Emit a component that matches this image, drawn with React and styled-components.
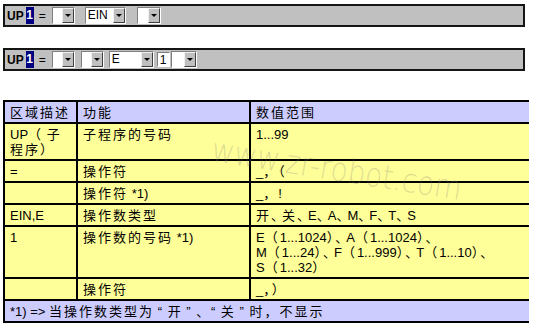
import React from 'react';
import styled, { createGlobalStyle } from 'styled-components';

const Global = createGlobalStyle`
  body {
    margin: 0;
    background: #fff;
    font-family: "Liberation Sans", "Noto Sans CJK SC", sans-serif;
  }
`;

const Page = styled.div`
  width: 540px;
  height: 328px;
  padding-top: 4px;
  box-sizing: border-box;
`;

// gray instruction bar with the editable fields
const Bar = styled.div`
  display: flex;
  align-items: center;
  box-sizing: border-box;
  width: 522px;
  height: 23px;
  margin: 0 0 ${p => p.$mb || 0}px 3px;
  padding-left: 2px;
  background: #c0c0c0;
  border: 2px solid #151515;
  font-size: 12px;
  color: #000;
`;

const Op = styled.span`
  font-weight: bold;
  margin-left: ${p => p.$ml || 0}px;
`;

const Eq = styled.span`
  margin-left: ${p => p.$ml || 0}px;
`;

const Selected = styled.span`
  display: inline-block;
  width: 8px;
  height: 17px;
  line-height: 17px;
  margin-left: ${p => p.$ml || 0}px;
  background: #000080;
  color: #fff;
  font-weight: bold;
  text-align: center;
`;

const Combo = styled.div`
  display: inline-flex;
  height: 15px;
  margin-left: ${p => p.$ml || 0}px;
  border: 1px solid;
  border-color: #808080 #fff #fff #808080;
`;

const Field = styled.div`
  width: ${p => p.$w}px;
  background: #fff;
  line-height: 15px;
  padding-left: 2px;
  box-sizing: border-box;
  overflow: hidden;
`;

const DropBtn = styled.div`
  display: flex;
  align-items: center;
  justify-content: center;
  width: 12px;
  box-sizing: border-box;
  background: #c0c0c0;
  border: 1px solid;
  border-color: #f0f0f0 #404040 #404040 #f0f0f0;

  &::after {
    content: '';
    border-left: 3px solid transparent;
    border-right: 3px solid transparent;
    border-top: 3px solid #000;
  }
`;

const Input = styled.div`
  width: ${p => p.$w}px;
  height: 15px;
  margin-left: ${p => p.$ml || 0}px;
  line-height: 15px;
  padding-left: 2px;
  box-sizing: border-box;
  background: #fff;
  border: 1px solid;
  border-color: #808080 #fff #fff #808080;
`;

const Select = ({ w, ml, value }) => (
  <Combo $ml={ml}>
    <Field $w={w}>{value}</Field>
    <DropBtn />
  </Combo>
);

const TableWrap = styled.div`
  position: relative;
  width: 526px;
  margin-left: 3px;
  overflow: hidden;
`;

const Table = styled.table`
  width: 526px;
  border-collapse: collapse;
  table-layout: fixed;
  font-size: 13px;
  color: #000;
`;

const Cell = styled.td`
  border: 2px solid #000;
  padding: 3px 5px 2px;
  line-height: 15px;
  vertical-align: top;
  background: ${p => (p.$head ? '#ccccff' : '#ffff99')};
  height: ${p => p.$h}px;
  box-sizing: border-box;
  white-space: nowrap;
`;

// Chinese runs are set wider than the latin ones
const Zh = styled.span`
  letter-spacing: 2px;
`;

// the enumeration comma sits tight against its neighbours
const Dun = styled.span`
  letter-spacing: -4px;
  margin-right: 2px;
`;

const Watermark = styled.div`
  position: absolute;
  left: 212px;
  top: 30px;
  font-family: "DejaVu Sans", sans-serif;
  font-weight: 200;
  font-size: 33px;
  color: rgba(120, 120, 120, 0.26);
  transform: rotate(9deg) scaleX(0.85);
  transform-origin: left top;
  white-space: nowrap;
  pointer-events: none;
`;

const zh = text =>
  text.split(/([\u2018-\u201d\u3000-\u9fff\uff00-\uffef]+)/).map((part, i) => {
    if (i % 2 === 0) return part;
    if (!part.includes('、')) return <Zh key={i}>{part}</Zh>;
    return (
      <Zh key={i}>
        {part.split('、').map((s, j) => (
          <React.Fragment key={j}>
            {j > 0 && <Dun>、</Dun>}
            {s}
          </React.Fragment>
        ))}
      </Zh>
    );
  });

const lines = (...parts) =>
  parts.map((p, i) => (
    <React.Fragment key={i}>
      {i > 0 && <br />}
      {zh(p)}
    </React.Fragment>
  ));

const rows = [
  { a: ['UP（ 子', '程序）'], b: ['子程序的号码'], c: ['1...99'], h: 36 },
  { a: ['='], b: ['操作符'], c: ['_，（'], h: 22 },
  { a: [''], b: ['操作符 *1)'], c: ['_，!'], h: 21 },
  { a: ['EIN,E'], b: ['操作数类型'], c: ['开、关、E、A、M、F、T、S'], h: 22 },
  {
    a: ['1'],
    b: ['操作数的号码 *1)'],
    c: ['E（1...1024）、A（1...1024）、', 'M（1...24）、F（1...999）、T（1...10）、', 'S（1...32）'],
    h: 52,
  },
  { a: [''], b: ['操作符'], c: ['_，）'], h: 21 },
];

export default function App() {
  return (
    <Page>
      <Global />
      <Bar $mb={21}>
        <Op>UP</Op>
        <Selected $ml={2}>1</Selected>
        <Eq $ml={5}>=</Eq>
        <Select ml={6} w={9} />
        <Select ml={10} w={27} value="EIN" />
        <Select ml={11} w={10} />
      </Bar>
      <Bar $mb={29}>
        <Op>UP</Op>
        <Selected $ml={2}>1</Selected>
        <Eq $ml={5}>=</Eq>
        <Select ml={6} w={9} />
        <Select ml={6} w={9} />
        <Select ml={5} w={31} value="E" />
        <Input $ml={3} $w={13}>1</Input>
        <Select ml={1} w={12} />
      </Bar>
      <TableWrap>
        <Table>
          <colgroup>
            <col style={{ width: 73 }} />
            <col style={{ width: 173 }} />
            <col style={{ width: 280 }} />
          </colgroup>
          <tbody>
            <tr>
              <Cell $head $h={22}>{zh('区域描述')}</Cell>
              <Cell $head $h={22}>{zh('功能')}</Cell>
              <Cell $head $h={22}>{zh('数值范围')}</Cell>
            </tr>
            {rows.map((r, i) => (
              <tr key={i}>
                <Cell $h={r.h}>{lines(...r.a)}</Cell>
                <Cell $h={r.h}>{lines(...r.b)}</Cell>
                <Cell $h={r.h}>{lines(...r.c)}</Cell>
              </tr>
            ))}
            <tr>
              <Cell $head $h={22} colSpan={3}>
                {zh('*1) => 当操作数类型为 “ 开 ” 、 “ 关 ” 时，不显示')}
              </Cell>
            </tr>
          </tbody>
        </Table>
        <Watermark>www.zr-robot.com</Watermark>
      </TableWrap>
    </Page>
  );
}
